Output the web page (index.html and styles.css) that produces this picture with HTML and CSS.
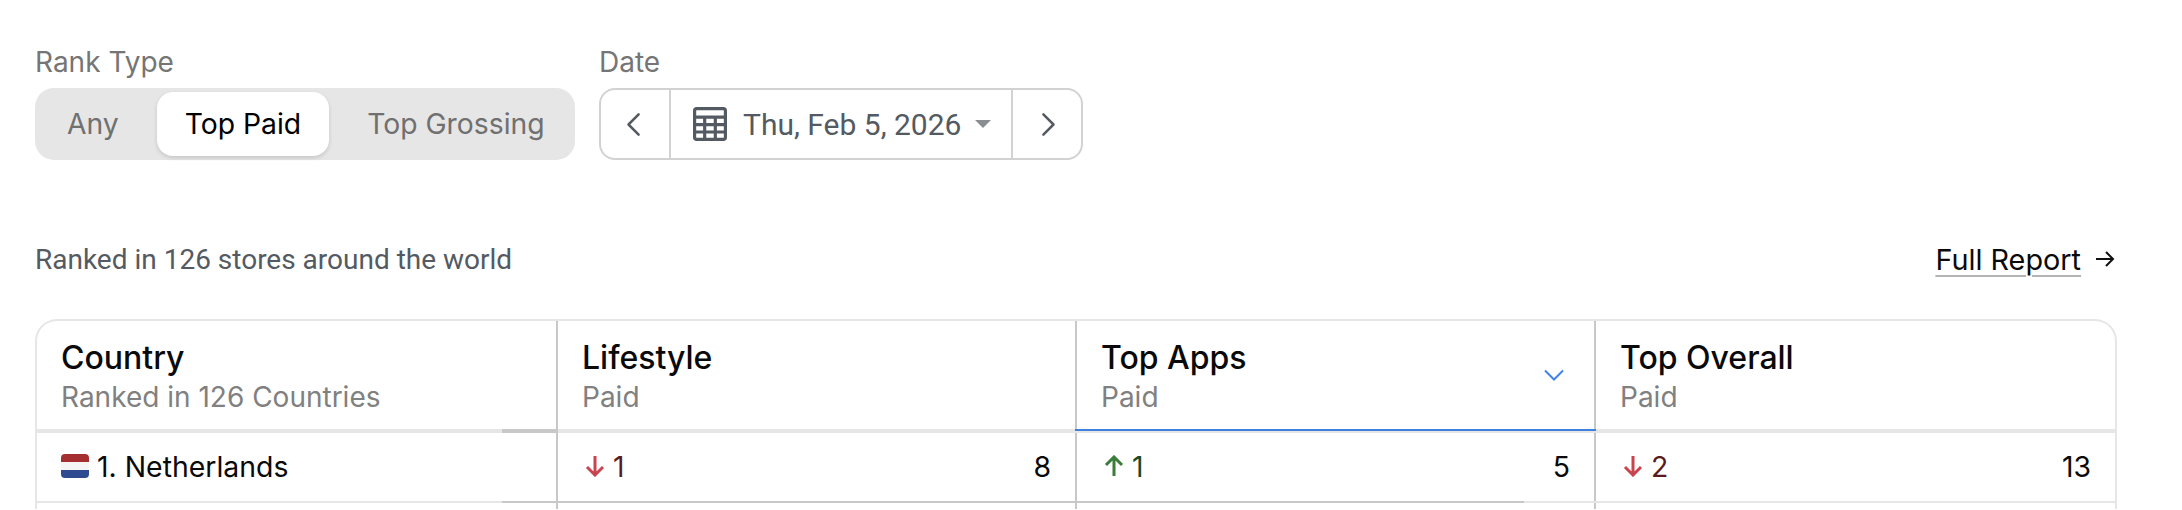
FILE: index.html
```html
<!DOCTYPE html>
<html lang="en">
<head>
<meta charset="utf-8">
<title>Rankings</title>
<link rel="stylesheet" href="styles.css">
</head>
<body>
<main class="page">
  <section class="filters">
    <div class="field">
      <div class="field-label">Rank Type</div>
      <div class="segmented">
        <div class="seg">Any</div>
        <div class="seg seg-active">Top Paid</div>
        <div class="seg">Top Grossing</div>
      </div>
    </div>
    <div class="field">
      <div class="field-label">Date</div>
      <div class="datepicker">
        <div class="nav-btn nav-prev">
          <svg class="nav-icon" viewBox="0 0 16 24"><path d="M13 3 4 12l9 9"/></svg>
        </div>
        <div class="date-value">
          <svg class="cal-icon" viewBox="0 0 32 32"><rect x="1.5" y="1.5" width="29" height="29" rx="2"/><path d="M1.5 9.5h29M1.5 16.5h29M1.5 23.5h29M11 9.5v21M21 9.5v21"/></svg>
          <span class="date-text">Thu, Feb 5, 2026</span>
          <svg class="caret" viewBox="0 0 16 8"><path d="M0 0h16L8 8z"/></svg>
        </div>
        <div class="nav-btn nav-next">
          <svg class="nav-icon" viewBox="0 0 16 24"><path d="M3 3l9 9-9 9"/></svg>
        </div>
      </div>
    </div>
  </section>

  <section class="summary">
    <div class="summary-text">Ranked in 126 stores around the world</div>
    <div class="report">
      <span class="report-link">Full Report</span>
      <svg class="report-arrow" viewBox="0 0 20 20"><path d="M1 10h17M11 3l7 7-7 7"/></svg>
    </div>
  </section>

  <section class="table">
    <div class="th">
      <div class="th-title">Country</div>
      <div class="th-sub">Ranked in 126 Countries</div>
    </div>
    <div class="th">
      <div class="th-title">Lifestyle</div>
      <div class="th-sub">Paid</div>
    </div>
    <div class="th th-sorted">
      <div>
        <div class="th-title">Top Apps</div>
        <div class="th-sub">Paid</div>
      </div>
      <svg class="sort-icon" viewBox="0 0 20 12"><path d="M1 1.5 10 10.5 19 1.5"/></svg>
    </div>
    <div class="th th-last">
      <div class="th-title">Top Overall</div>
      <div class="th-sub">Paid</div>
    </div>

    <div class="rule rule-head"></div>

    <div class="td td-dark">
      <div class="country">
        <svg class="flag" viewBox="0 0 28 24"><rect width="28" height="8" fill="#a52f30"/><rect y="8" width="28" height="8" fill="#f5f5f5"/><rect y="16" width="28" height="8" fill="#2f4b8f"/></svg>
        <span>1. Netherlands</span>
      </div>
    </div>
    <div class="td td-dark">
      <div class="delta delta-down">
        <svg class="delta-icon" viewBox="0 0 26 22"><path d="M13 1v19M5 12l8 8 8-8"/></svg><span>1</span>
      </div>
      <div class="rank">8</div>
    </div>
    <div class="td td-dark">
      <div class="delta delta-up">
        <svg class="delta-icon" viewBox="0 0 26 22"><path d="M13 21V2M5 10l8-8 8 8"/></svg><span>1</span>
      </div>
      <div class="rank">5</div>
    </div>
    <div class="td td-light">
      <div class="delta delta-down">
        <svg class="delta-icon" viewBox="0 0 26 22"><path d="M13 1v19M5 12l8 8 8-8"/></svg><span>2</span>
      </div>
      <div class="rank">13</div>
    </div>

    <div class="rule rule-row"></div>

    <div class="td td-dark"></div>
    <div class="td td-dark"></div>
    <div class="td td-dark"></div>
    <div class="td td-light"></div>
  </section>
</main>
</body>
</html>
```

FILE: styles.css
```css
* { box-sizing: border-box; }
html, body { margin: 0; height: 510px; overflow: hidden; background: #fff; }
body { font-family: Inter, "Liberation Sans", sans-serif; }
.page { padding: 47px 65px 0 35px; }

.filters { display: flex; gap: 24px; }
.field-label { font-size: 28px; line-height: 31px; color: #757575; margin-bottom: 10px; }
.segmented { display: flex; gap: 10px; height: 72px; padding: 4px 3px 4px 4px; width: 540px; background: #e6e6e6; border-radius: 19px; }
.seg { display: flex; align-items: center; justify-content: center; flex: none; white-space: nowrap; font-size: 28.3px; color: #707070; padding: 0 28px; border-radius: 16px; }
.seg-active { background: #fff; color: #000; box-shadow: 0 2px 4px rgba(0,0,0,.14); }

.datepicker { display: flex; height: 72px; width: 484px; border: 2px solid #d2d2d2; border-radius: 16px; align-items: stretch; }
.nav-btn { flex: none; display: flex; align-items: center; justify-content: center; }
.nav-prev { width: 68px; padding-right: 5px; }
.nav-next { width: 68px; padding-left: 3px; }
.nav-icon { width: 18px; height: 27px; fill: none; stroke: #545a62; stroke-width: 2.2; stroke-linecap: round; stroke-linejoin: round; }
.date-value { flex: 1; display: flex; align-items: center; padding-left: 22px; border-left: 2px solid #d2d2d2; border-right: 2px solid #d2d2d2; }
.cal-icon { width: 34px; height: 34px; fill: none; stroke: #545a62; stroke-width: 3; }
.date-text { font-family: Roboto, sans-serif; font-size: 30px; color: #545a62; margin-left: 16px; }
.caret { width: 16px; height: 8px; fill: #8a8d92; margin-left: 14px; }

.summary { display: flex; justify-content: space-between; align-items: center; margin-top: 81px; height: 36px; padding-right: 2px; }
.summary-text { font-family: Roboto, sans-serif; font-size: 28px; color: #545a62; }
.report { display: flex; align-items: center; gap: 14px; }
.report-link { font-size: 28.8px; color: #0a0a0a; text-decoration: underline; text-decoration-color: #b4b4b4; text-decoration-thickness: 2px; text-underline-offset: 5px; }
.report-arrow { width: 20px; height: 20px; fill: none; stroke: #111; stroke-width: 2; }

.table { margin-top: 42px; display: grid; grid-template-columns: 521px 519px 519px 1fr; grid-template-rows: 108px 4px 68px 2px 6px; border: 2px solid #e6e6e6; border-bottom: 0; border-radius: 22px 22px 0 0; }
.th { padding: 17px 24px 0 24px; border-right: 2px solid #c8c8c8; }
.th-last { border-right: 0; }
.th-sorted { display: flex; justify-content: space-between; position: relative; }
.th-sorted::after { content: ""; position: absolute; left: -2px; right: -2px; bottom: -2px; height: 2px; background: #3f7fdd; }
.th-title { font-size: 32px; line-height: 40px; font-weight: 500; color: #0a0a0a; }
.th-sub { font-size: 28px; line-height: 39px; color: #808080; }
.sort-icon { width: 20px; height: 12px; fill: none; stroke: #3f84e8; stroke-width: 2; align-self: center; margin-top: -17px; margin-right: 6px; }

.rule { grid-column: 1 / -1; }
.rule-head { background: linear-gradient(to right, #e6e6e6 465px, #c8c8c8 465px, #c8c8c8 521px, #e6e6e6 521px); }
.rule-row { background: linear-gradient(to right, #e6e6e6 465px, #c8c8c8 465px, #c8c8c8 1487px, #e6e6e6 1487px); }

.td { display: flex; justify-content: space-between; align-items: center; padding: 0 24px 2px; font-size: 28.4px; color: #0a0a0a; }
.td-dark { border-right: 2px solid #c8c8c8; }
.td-light { border-right: 0; }
.country { display: flex; align-items: center; gap: 8px; }
.flag { width: 28px; height: 24px; border-radius: 4px; }
.delta { display: flex; align-items: center; gap: 5px; }
.delta-icon { width: 26px; height: 22px; fill: none; stroke-width: 3; }
.delta-down { color: #5a1a20; }
.delta-down .delta-icon { stroke: #c8444f; }
.delta-up { color: #1d4a1d; }
.delta-up .delta-icon { stroke: #3a7d3a; }
```
